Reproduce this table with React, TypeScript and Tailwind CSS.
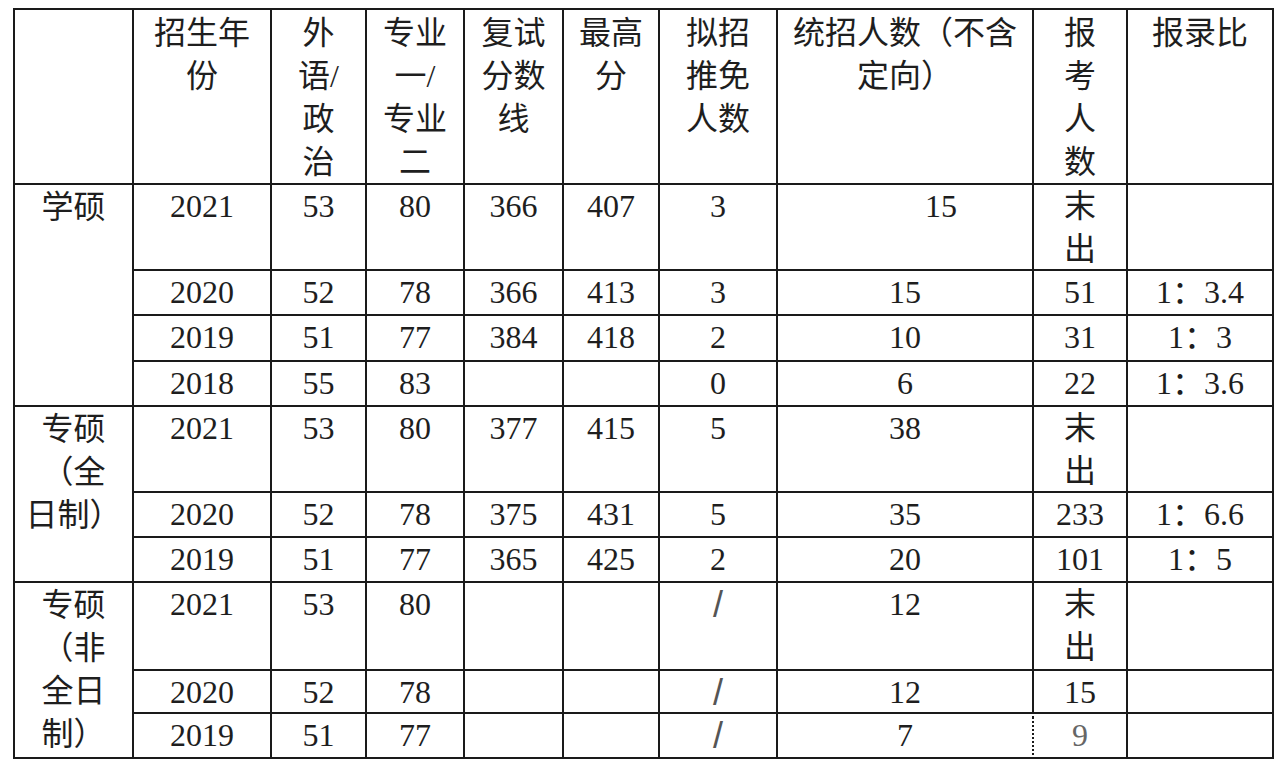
import React from 'react';

type Row = {
  year: string;
  foreign: string;
  major: string;
  retest?: string;
  top?: string;
  exempt: string;
  quota: string;
  applicants: string[];
  ratio?: string;
  quotaShift?: boolean;
  faded?: boolean;
};

type Section = {
  label: string[];
  span: string;
  rows: Row[];
};

const headers: string[][] = [
  [],
  ['招生年', '份'],
  ['外', '语/', '政', '治'],
  ['专业', '一/', '专业', '二'],
  ['复试', '分数', '线'],
  ['最高', '分'],
  ['拟招', '推免', '人数'],
  ['统招人数（不含', '定向）'],
  ['报', '考', '人', '数'],
  ['报录比'],
];

const sections: Section[] = [
  {
    label: ['学硕'],
    span: 'row-span-4',
    rows: [
      { year: '2021', foreign: '53', major: '80', retest: '366', top: '407', exempt: '3', quota: '15', applicants: ['末', '出'], quotaShift: true },
      { year: '2020', foreign: '52', major: '78', retest: '366', top: '413', exempt: '3', quota: '15', applicants: ['51'], ratio: '1：3.4' },
      { year: '2019', foreign: '51', major: '77', retest: '384', top: '418', exempt: '2', quota: '10', applicants: ['31'], ratio: '1：3' },
      { year: '2018', foreign: '55', major: '83', exempt: '0', quota: '6', applicants: ['22'], ratio: '1：3.6' },
    ],
  },
  {
    label: ['专硕', '（全', '日制）'],
    span: 'row-span-3',
    rows: [
      { year: '2021', foreign: '53', major: '80', retest: '377', top: '415', exempt: '5', quota: '38', applicants: ['末', '出'] },
      { year: '2020', foreign: '52', major: '78', retest: '375', top: '431', exempt: '5', quota: '35', applicants: ['233'], ratio: '1：6.6' },
      { year: '2019', foreign: '51', major: '77', retest: '365', top: '425', exempt: '2', quota: '20', applicants: ['101'], ratio: '1：5' },
    ],
  },
  {
    label: ['专硕', '（非', '全日', '制）'],
    span: 'row-span-3',
    rows: [
      { year: '2021', foreign: '53', major: '80', exempt: '/', quota: '12', applicants: ['末', '出'] },
      { year: '2020', foreign: '52', major: '78', exempt: '/', quota: '12', applicants: ['15'] },
      { year: '2019', foreign: '51', major: '77', exempt: '/', quota: '7', applicants: ['9'], faded: true },
    ],
  },
];

const Cell: React.FC<{ className?: string; children?: React.ReactNode }> = ({ className = '', children }) => (
  <div className={`bg-white text-center whitespace-nowrap ${className}`}>{children}</div>
);

const Lines: React.FC<{ lines: string[] }> = ({ lines }) => (
  <>
    {lines.map((line, i) => (
      <div key={i}>{line}</div>
    ))}
  </>
);

export default function App() {
  return (
    <div className="min-h-screen bg-white pt-[8px] pl-[13px] text-[#1e1e1e]">
      <div className="grid w-fit grid-cols-[117px_136px_93px_96px_97px_94px_116px_254px_92px_144px] grid-rows-[173px_84px_43px_44px_43px_84px_43px_43px_86px_41px_43px] gap-[2px] bg-[#1a1a1a] p-[2px] font-['Liberation_Serif','Noto_Sans_CJK_SC',serif] text-[32px] leading-[43px]">
        {headers.map((h, i) => (
          <Cell key={`h${i}`} className="pt-[2px] leading-[43px]">
            <Lines lines={h} />
          </Cell>
        ))}

        {sections.map((section, si) => (
          <React.Fragment key={si}>
            {section.rows.map((row, ri) => (
              <React.Fragment key={ri}>
                {ri === 0 && (
                  <Cell className={`${section.span} pt-[1px]`}>
                    <Lines lines={section.label} />
                  </Cell>
                )}
                <Cell>{row.year}</Cell>
                <Cell>{row.foreign}</Cell>
                <Cell>{row.major}</Cell>
                <Cell>{row.retest}</Cell>
                <Cell>{row.top}</Cell>
                <Cell>
                  {row.exempt === '/' ? (
                    <span className="font-['Liberation_Sans',sans-serif] text-[36px] font-light text-[#555]">/</span>
                  ) : (
                    row.exempt
                  )}
                </Cell>
                <Cell className={row.quotaShift ? 'pl-[72px]' : ''}>{row.quota}</Cell>
                <Cell className={row.faded ? 'relative text-[#666]' : ''}>
                  {row.faded && (
                    <div className="absolute -left-[2px] top-0 h-full border-l-2 border-dotted border-white" />
                  )}
                  <Lines lines={row.applicants} />
                </Cell>
                <Cell>{row.ratio}</Cell>
              </React.Fragment>
            ))}
          </React.Fragment>
        ))}
      </div>
    </div>
  );
}
